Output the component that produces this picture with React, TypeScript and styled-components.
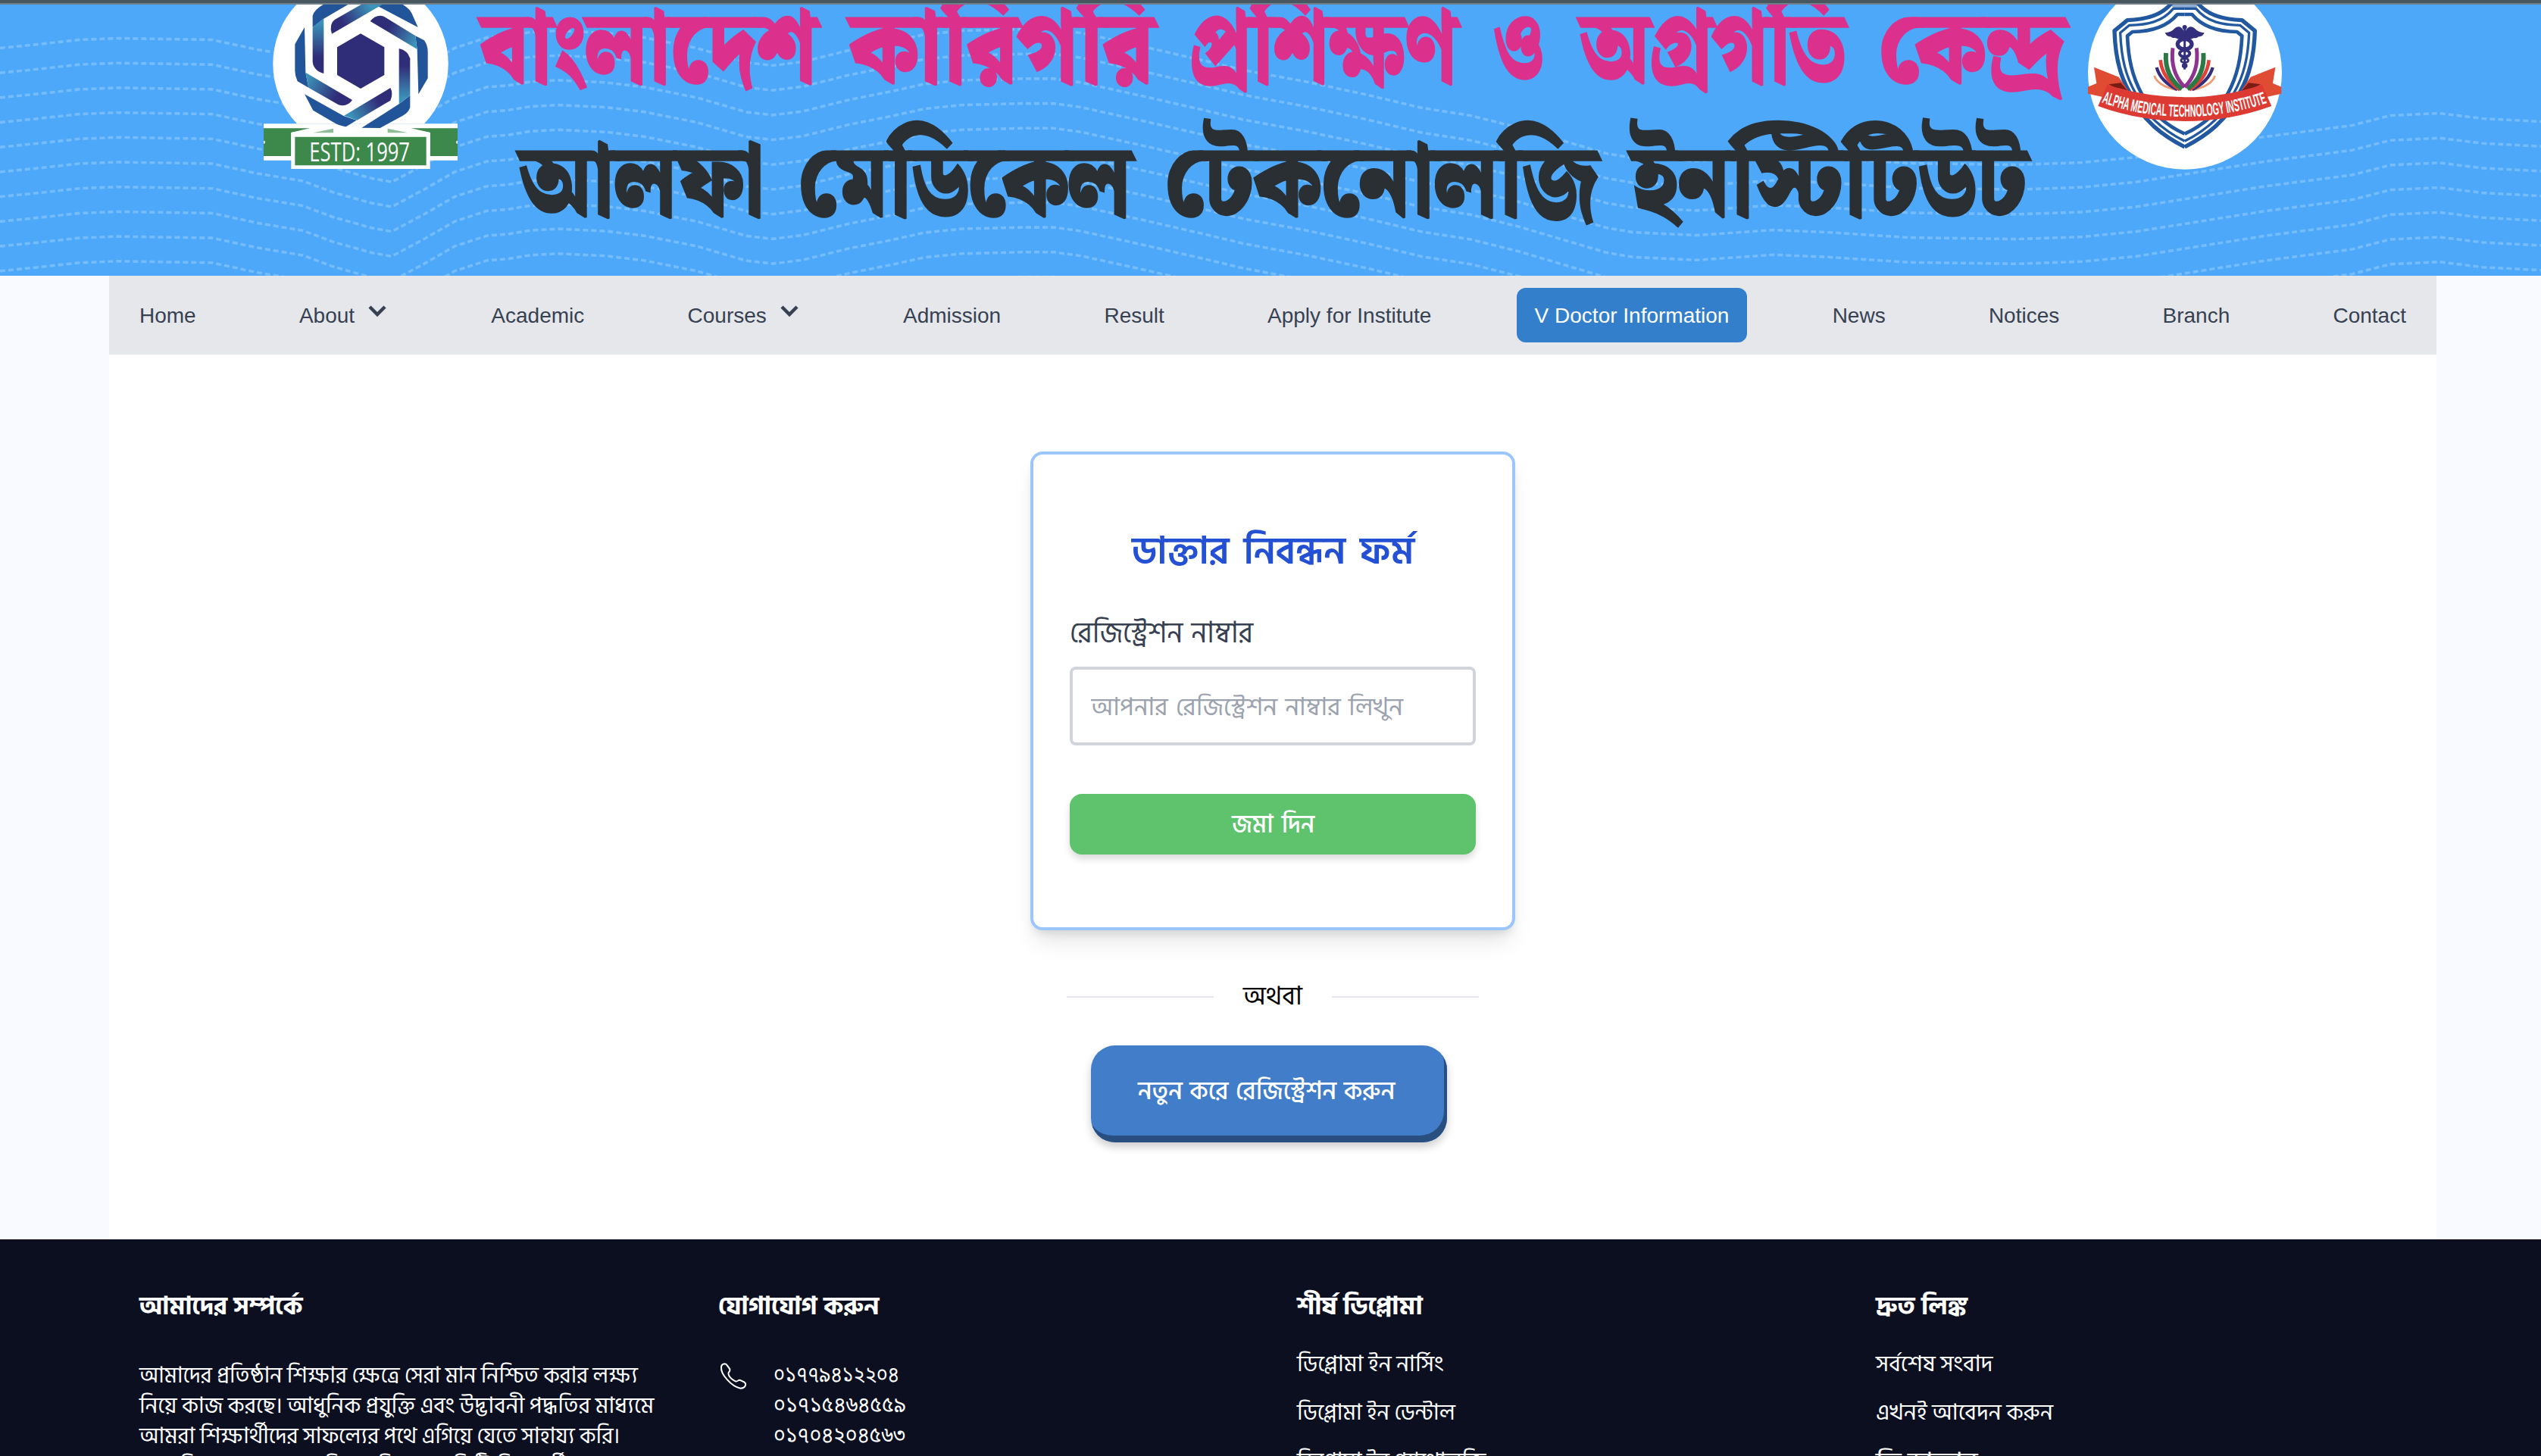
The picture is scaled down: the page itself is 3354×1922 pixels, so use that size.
import React, { useLayoutEffect, useRef, useState } from "react";
import styled, { createGlobalStyle } from "styled-components";

const bangla = `"Hind Siliguri", "Noto Sans Bengali", "Noto Sans", sans-serif`;
const banglaDigits = `"Noto Sans Bengali", "Hind Siliguri", sans-serif`;
const latin = `"Liberation Sans", Arial, sans-serif`;

const GlobalStyle = createGlobalStyle`
  *, *::before, *::after { box-sizing: border-box; }
  body { margin: 0; background: #f8faff; font-family: ${bangla}; overflow: hidden; }
  h1, h2, h3, p, ul { margin: 0; padding: 0; list-style: none; }
  svg { display: block; flex: none; }
`;

/* ---------- text that keeps to a set measure ---------- */

const FitBox = styled.span<{ $width: number }>`
  display: block;
  width: ${(p) => p.$width}px;
  white-space: nowrap;
`;

const FitInner = styled.span`
  display: inline-block;
  transform-origin: 0 50%;
`;

function Fit({ width, children }: { width: number; children: React.ReactNode }) {
  const ref = useRef<HTMLSpanElement>(null);
  const [scale, setScale] = useState(1);
  useLayoutEffect(() => {
    if (ref.current) setScale(width / ref.current.offsetWidth);
  }, [width]);
  return (
    <FitBox $width={width}>
      <FitInner ref={ref} style={{ transform: `scaleX(${scale})` }}>
        {children}
      </FitInner>
    </FitBox>
  );
}

/* ---------- banner ---------- */

const Page = styled.div`
  width: 3354px;
  height: 1922px;
  overflow: hidden;
  display: flex;
  flex-direction: column;
`;

const TopStrip = styled.div`
  height: 6px;
  flex: none;
  background: #47565f;
  border-bottom: 2px solid #6f7e88;
`;

const Banner = styled.header`
  position: relative;
  height: 358px;
  flex: none;
  display: flex;
  align-items: flex-start;
  padding-left: 348px;
  background: #4da8f9;
  overflow: hidden;
`;

const Waves = styled.svg`
  position: absolute;
  inset: 0;
`;

const Titles = styled.div`
  position: relative;
  width: 2152px;
  flex: none;
  display: flex;
  flex-direction: column;
`;

const TitleLine = styled.h1<{ $color: string; $indent: number; $top: number }>`
  display: flex;
  height: 176px;
  margin-top: ${(p) => p.$top}px;
  padding-left: ${(p) => p.$indent}px;
  color: ${(p) => p.$color};
  font-family: "Noto Serif Bengali", ${bangla};
  font-weight: 900;
  font-size: 132px;
  line-height: 176px;
  word-spacing: 0;
  -webkit-text-stroke: 3px ${(p) => p.$color};
`;

const Gap = styled.span<{ $width: number }>`
  flex: none;
  width: ${(p) => p.$width}px;
`;

const Logo = styled.svg`
  position: relative;
`;

const wave =
  "M0 227L50 222L105 216L155 214L280 216L340 229L400 239L440 254L490 268L517 273L560 250L600 227L643 213L670 211L700 206L737 204L800 207L850 213L920 227L985 246L1020 250L1060 245L1120 230L1180 218L1220 209L1270 204L1349 202L1391 202L1427 207L1513 226L1591 244L1641 256L1727 272L1806 289L1877 306L1941 316L2005 332L2120 366L2155 372L2240 376L2341 369L2412 372L2520 379L2662 381L2748 378L2820 371L2990 344L3105 329L3155 316L3220 313L3277 320L3354 324";

const blades = [
  "M248 108V62Q255 38 290 18H388L292 74Z",
  "M216 108L220 287L232 347L188 322Q178 300 178 280V175Z",
  "M216 373L372 460L422 476L380 502Q355 498 340 490L250 437Z",
  "M442 506L590 412L634 378V425Q628 445 605 458L515 507Z",
  "M655 142L690 160Q704 180 704 205V310L667 373L662 195Z",
  "M490 18H605Q632 35 640 52L665 108L510 26Z",
];

const bars: [string, number, number, number, number][] = [
  ["M248 108L292 72V291Q252 280 248 245Z", 270, 90, 270, 225],
  ["M220 287L405 396Q385 425 350 415L232 347Z", 225, 315, 340, 385],
  ["M372 458L556 348Q568 370 556 398L424 476Z", 400, 465, 510, 400],
  ["M590 192Q625 200 634 232V378L590 412Z", 612, 390, 612, 260],
  ["M476 84Q500 55 530 65L655 142L662 195Z", 655, 170, 550, 108],
  ["M324 134Q312 95 335 78L440 18H524Z", 480, 30, 370, 95],
];

function HexLogo() {
  return (
    <Logo width="256" height="217" viewBox="54 18 768 651">
      <defs>
        {bars.map(([, x1, y1, x2, y2], i) => (
          <linearGradient key={i} id={`bar${i}`} gradientUnits="userSpaceOnUse" x1={x1} y1={y1} x2={x2} y2={y2}>
            <stop offset="0" stopColor="#3c93b9" />
            <stop offset="1" stopColor="#302d78" />
          </linearGradient>
        ))}
      </defs>
      <path d="M186 490A343 343 0 0 1 184 18H692A343 343 0 0 1 690 490Z" fill="#fff" />
      <path d="M54 490H822V635H54Z" fill="#fff" />
      <path d="M54 508H255L163 525V618H54ZM822 508H620L713 525V618H822Z" fill="#3d884b" />
      <path d="M163 525L255 503H620L713 525V669H163Z" fill="#fff" />
      <path d="M250 526L330 509V526ZM625 526L545 509V526Z" fill="#8fbd97" />
      <path d="M178 542H698V655H178Z" fill="#3d884b" />
      <circle cx="54" cy="563" r="6" fill="#fff" />
      <circle cx="822" cy="563" r="6" fill="#fff" />
      {blades.map((d) => (
        <path key={d} d={d} fill="#22549a" />
      ))}
      {bars.map(([d], i) => (
        <path key={d} d={d} fill={`url(#bar${i})`} />
      ))}
      <path d="M438 133L532 187V297L438 351L345 297V187Z" fill="#302d78" />
      <text x="235" y="640" fontSize="102" fontFamily="'Open Sans', sans-serif" fill="#fff" textLength="398" lengthAdjust="spacingAndGlyphs">
        ESTD: 1997
      </text>
    </Logo>
  );
}

const petals: [string, string, number][] = [
  ["M341 300Q355 340 425 355", "#ee9a72", 8],
  ["M350 267Q365 322 432 355", "#332f7d", 13],
  ["M365 238Q372 310 442 356", "#e0413b", 14],
  ["M387 210Q380 300 450 353", "#2b7a45", 18],
  ["M414 190Q402 285 461 345", "#8f3390", 15],
];

function ShieldHalf() {
  return (
    <g>
      <g fill="none" stroke="#22589f" strokeLinejoin="round">
        <path d="M461 582C380 540 290 480 240 360C205 300 186 230 183 122L234 80C310 78 370 60 408 14" strokeWidth="16" />
        <path d="M461 559C384 520 307 460 267 370C227 300 210 230 206 130L242 100C312 98 372 88 416 34H461" strokeWidth="10" />
        <path d="M461 530C392 500 322 440 290 370C252 300 238 230 234 142L254 126C332 125 392 105 432 57H461" strokeWidth="14" />
      </g>
      {petals.map(([d, color, w]) => (
        <path key={d} d={d} fill="none" stroke={color} strokeWidth={w} />
      ))}
      <path d="M461 130C450 104 436 100 422 112C410 126 398 128 383 130C388 142 398 146 406 145C414 154 424 150 430 152C440 158 450 152 461 148Z" fill="#332f7d" />
      <path d="M102 266L200 305L235 355L140 385L78 371V344L112 330Z" fill="#df4b33" />
      <path d="M160 334L208 328L236 360L190 350Z" fill="#7a1c16" />
    </g>
  );
}

function ShieldLogo() {
  return (
    <Logo width="256" height="218" viewBox="78 18 768 654">
      <circle cx="462" cy="287" r="384" fill="#fff" />
      <path d="M408 18H514L506 34H416Z" fill="#8fabd0" />
      <ShieldHalf />
      <g transform="translate(922 0) scale(-1 1)">
        <ShieldHalf />
      </g>
      <g fill="none" stroke="#332f7d">
        <circle cx="461" cy="108" r="5" strokeWidth="8" />
        <path d="M461 105V275" strokeWidth="9" />
        <ellipse cx="461" cy="175" rx="28" ry="20" strokeWidth="16" />
        <ellipse cx="461" cy="212" rx="20" ry="13" strokeWidth="12" />
        <ellipse cx="461" cy="239" rx="14" ry="9" strokeWidth="9" />
        <ellipse cx="461" cy="260" rx="8" ry="6" strokeWidth="7" />
      </g>
      <path d="M155 335Q300 385 461 385Q622 385 767 335L805 420Q640 480 461 480Q282 480 118 420Z" fill="#dc3a33" />
      <path id="ribbonLine" d="M132 406Q290 462 461 462Q632 462 797 404" fill="none" />
      <text fontSize="68" fontWeight="700" fontFamily="'Liberation Sans', sans-serif" fill="#fff">
        <textPath href="#ribbonLine" textLength="668" lengthAdjust="spacingAndGlyphs">
          ALPHA MEDICAL TECHNOLOGY INSTITUTE
        </textPath>
      </text>
    </Logo>
  );
}

/* ---------- navigation ---------- */

const Content = styled.div`
  width: 3072px;
  height: 1272px;
  flex: none;
  align-self: flex-start;
  margin-left: 144px;
  background: #fff;
  display: flex;
  flex-direction: column;
  align-items: center;
`;

const Nav = styled.nav`
  width: 100%;
  height: 104px;
  flex: none;
  padding: 0 16px;
  display: flex;
  align-items: center;
  justify-content: space-between;
  background: #e5e7eb;
`;

const NavItem = styled.a<{ $active?: boolean }>`
  display: flex;
  align-items: center;
  gap: 16px;
  height: 72px;
  padding: 2px 24px 0;
  border-radius: 12px;
  font: 400 28px/40px ${latin};
  white-space: nowrap;
  color: ${(p) => (p.$active ? "#fff" : "#374151")};
  background: ${(p) => (p.$active ? "#337fcb" : "transparent")};
`;

const Chevron = styled.svg`
  margin-bottom: 15px;
`;

const navItems = [
  { label: "Home" },
  { label: "About", menu: true },
  { label: "Academic" },
  { label: "Courses", menu: true },
  { label: "Admission" },
  { label: "Result" },
  { label: "Apply for Institute" },
  { label: "V Doctor Information", active: true },
  { label: "News" },
  { label: "Notices" },
  { label: "Branch" },
  { label: "Contact" },
];

/* ---------- form ---------- */

const Card = styled.form`
  width: 640px;
  height: 632px;
  flex: none;
  margin-top: 128px;
  padding: 97px 48px 0;
  display: flex;
  flex-direction: column;
  border: 4px solid #9bc6fa;
  border-radius: 16px;
  background: #fff;
  word-spacing: 3px;
  box-shadow: 0 20px 30px -6px rgba(0, 0, 0, 0.1), 0 8px 12px -4px rgba(0, 0, 0, 0.1);
`;

const CardTitle = styled.h2`
  align-self: center;
  font-size: 50px;
  font-weight: 600;
  line-height: 64px;
  word-spacing: 7px;
  color: #2450d3;
`;

const Label = styled.label`
  margin-top: 48px;
  font-size: 38px;
  line-height: 56px;
  color: #374151;
`;

const Input = styled.input`
  height: 104px;
  margin-top: 15px;
  padding: 3px 24px 0;
  border: 4px solid #d1d5db;
  border-radius: 8px;
  font: 400 33px ${bangla};
  word-spacing: 3px;
  &::placeholder { color: #9ca3af; opacity: 1; }
`;

const Submit = styled.button`
  height: 80px;
  margin-top: 64px;
  padding: 1px 0 0;
  border: 0;
  border-radius: 16px;
  display: flex;
  align-items: center;
  justify-content: center;
  background: #5fc26d;
  color: #fff;
  font: 500 34px/56px ${bangla};
  word-spacing: 4px;
  box-shadow: 0 6px 10px rgba(0, 0, 0, 0.14);
`;

const Divider = styled.div`
  width: 544px;
  height: 56px;
  flex: none;
  margin-top: 60px;
  display: flex;
  align-items: center;
  gap: 39px;
  font-size: 34px;
  line-height: 58px;
  color: #000;
`;

const Rule = styled.span`
  flex: 1;
  height: 2px;
  background: #e5e7eb;
`;

const Register = styled.button`
  width: 470px;
  height: 128px;
  flex: none;
  margin: 36px 10px 0 0;
  padding: 0 8px 6px 0;
  border: 0;
  border-radius: 32px;
  display: flex;
  align-items: center;
  justify-content: center;
  background: #427dca;
  color: #fff;
  font: 500 33px/56px ${bangla};
  word-spacing: 2px;
  box-shadow: inset -4px -9px 0 #284f80, 0 6px 12px rgba(0, 0, 0, 0.2);
`;

/* ---------- footer ---------- */

const Footer = styled.footer`
  height: 286px;
  flex: none;
  padding: 65px 114px 0 184px;
  display: grid;
  grid-template-columns: repeat(4, 764px);
  overflow: hidden;
  background: #0c0f1f;
  color: #fff;
  font-size: 29px;
  line-height: 40px;
`;

const FooterHeading = styled.h3`
  font-size: 33px;
  font-weight: 700;
  line-height: 48px;
`;

const Lines = styled.div`
  margin-top: 48px;
`;

const Phones = styled.div`
  display: flex;
  gap: 35px;
  margin-top: 48px;
`;

const PhoneNumbers = styled.div`
  font-family: ${banglaDigits};
  font-size: 29px;
`;

const Links = styled.ul`
  margin-top: 33px;
  display: flex;
  flex-direction: column;
  gap: 24px;
`;

type Line = [string, number];

const about: Line[] = [
  ["আমাদের প্রতিষ্ঠান শিক্ষার ক্ষেত্রে সেরা মান নিশ্চিত করার লক্ষ্য", 658],
  ["নিয়ে কাজ করছে। আধুনিক প্রযুক্তি এবং উদ্ভাবনী পদ্ধতির মাধ্যমে", 679],
  ["আমরা শিক্ষার্থীদের সাফল্যের পথে এগিয়ে যেতে সাহায্য করি।", 634],
  ["দক্ষ শিক্ষক এবং আধুনিক পরিবেশে প্রতিটি শিক্ষার্থীর পাশে", 640],
];
const phones: Line[] = [
  ["০১৭৭৯৪১২২০৪", 166],
  ["০১৭১৫৪৬৪৫৫৯", 175],
  ["০১৭০৪২০৪৫৬৩", 174],
];
const diplomas: Line[] = [
  ["ডিপ্লোমা ইন নার্সিং", 194],
  ["ডিপ্লোমা ইন ডেন্টাল", 209],
  ["ডিপ্লোমা ইন প্যাথোলজি", 249],
];
const quick: Line[] = [
  ["সর্বশেষ সংবাদ", 154],
  ["এখনই আবেদন করুন", 234],
  ["ভি ডাক্তার", 134],
];

function LinkColumn({ title, width, items }: { title: string; width: number; items: Line[] }) {
  return (
    <div>
      <FooterHeading><Fit width={width}>{title}</Fit></FooterHeading>
      <Links>
        {items.map(([text, w]) => (
          <li key={text}><Fit width={w}>{text}</Fit></li>
        ))}
      </Links>
    </div>
  );
}

export default function App() {
  return (
    <Page>
      <GlobalStyle />
      <TopStrip />
      <Banner>
        <Waves width="3354" height="358" viewBox="0 6 3354 358">
          <g fill="none" stroke="#74bcfb" strokeWidth="3.6" strokeDasharray="7 4">
            {Array.from({ length: 11 }, (_, k) => (
              <path key={k} d={wave} transform={`translate(0 ${(k - 5) * 32.7})`} />
            ))}
          </g>
        </Waves>
        <HexLogo />
        <Titles>
          <TitleLine $color="#db318c" $indent={31} $top={-27}>
            <Fit width={444}>বাংলাদেশ</Fit><Gap $width={43} />
            <Fit width={402}>কারিগরি</Fit><Gap $width={47} />
            <Fit width={353}>প্রশিক্ষণ</Fit><Gap $width={48} />
            <Fit width={66}>ও</Fit><Gap $width={48} />
            <Fit width={349}>অগ্রগতি</Fit><Gap $width={46} />
            <Fit width={246}>কেন্দ্র</Fit>
          </TitleLine>
          <TitleLine $color="#2a2f33" $indent={82} $top={0}>
            <Fit width={323}>আলফা</Fit><Gap $width={46} />
            <Fit width={439}>মেডিকেল</Fit><Gap $width={45} />
            <Fit width={570}>টেকনোলজি</Fit><Gap $width={44} />
            <Fit width={523}>ইনস্টিটিউট</Fit>
          </TitleLine>
        </Titles>
        <ShieldLogo />
      </Banner>

      <Content>
        <Nav>
          {navItems.map((item) => (
            <NavItem key={item.label} $active={item.active}>
              {item.label}
              {item.menu && (
                <Chevron width="28" height="20" viewBox="0 0 28 20">
                  <path d="M4 5L14 15L24 5" fill="none" stroke="#374151" strokeWidth="4.5" />
                </Chevron>
              )}
            </NavItem>
          ))}
        </Nav>

        <Card>
          <CardTitle><Fit width={373}>ডাক্তার নিবন্ধন ফর্ম</Fit></CardTitle>
          <Label><Fit width={242}>রেজিস্ট্রেশন নাম্বার</Fit></Label>
          <Input placeholder="আপনার রেজিস্ট্রেশন নাম্বার লিখুন" />
          <Submit type="button"><Fit width={109}>জমা দিন</Fit></Submit>
        </Card>

        <Divider>
          <Rule />
          <Fit width={78}>অথবা</Fit>
          <Rule />
        </Divider>

        <Register type="button"><Fit width={339}>নতুন করে রেজিস্ট্রেশন করুন</Fit></Register>
      </Content>

      <Footer>
        <div>
          <FooterHeading><Fit width={216}>আমাদের সম্পর্কে</Fit></FooterHeading>
          <Lines>
            {about.map(([text, w]) => (
              <Fit key={text} width={w}>{text}</Fit>
            ))}
          </Lines>
        </div>
        <div>
          <FooterHeading><Fit width={212}>যোগাযোগ করুন</Fit></FooterHeading>
          <Phones>
            <svg width="38" height="37" viewBox="24 59 114 111">
              <path
                d="M36 82Q37 70 50 69Q56 69 60 76L70 90Q72 96 66 102Q62 108 66 114Q72 128 92 138Q98 140 103 135Q108 132 114 135L128 142Q134 147 132 154Q128 166 112 166Q85 160 60 132Q34 105 36 82Z"
                fill="none"
                stroke="#fff"
                strokeWidth="6"
              />
            </svg>
            <PhoneNumbers>
              {phones.map(([text, w]) => (
                <Fit key={text} width={w}>{text}</Fit>
              ))}
            </PhoneNumbers>
          </Phones>
        </div>
        <LinkColumn title="শীর্ষ ডিপ্লোমা" width={166} items={diplomas} />
        <LinkColumn title="দ্রুত লিঙ্ক" width={121} items={quick} />
      </Footer>
    </Page>
  );
}
